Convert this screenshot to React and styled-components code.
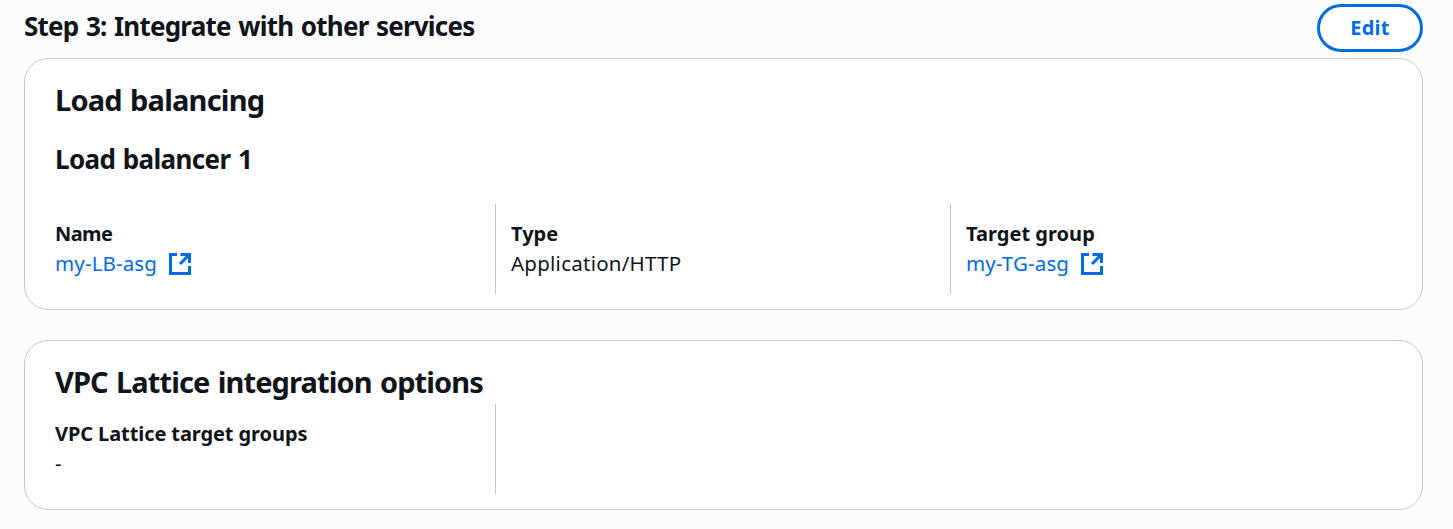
import React from 'react';
import styled, { createGlobalStyle } from 'styled-components';

const GlobalStyle = createGlobalStyle`
  * { box-sizing: border-box; }
  body {
    margin: 0;
    min-height: 100vh;
    background: #fcfcfe;
    color: #0f141a;
    font-family: "Noto Sans", "Open Sans", sans-serif;
    font-size: 20px;
    line-height: 30px;
  }
`;

const Page = styled.main`
  padding: 4px 30px 0 24px;
`;

const StepHeader = styled.header`
  display: flex;
  justify-content: space-between;
  align-items: flex-start;
  height: 54px;
`;

const Heading = styled.h2`
  margin: 0;
  font-size: ${(p) => p.$size}px;
  line-height: ${(p) => p.$line}px;
  font-weight: 680;
  letter-spacing: ${(p) => p.$tracking || 0}px;
  word-spacing: 1.5px;
  white-space: nowrap;
`;

const EditButton = styled.button`
  width: 106px;
  height: 48px;
  padding: 0;
  border: 3px solid #006ce0;
  border-radius: 24px;
  background: #fff;
  color: #006ce0;
  font: 700 20px/42px "Noto Sans", sans-serif;
  letter-spacing: 0.3px;
`;

const Card = styled.section`
  height: ${(p) => p.$height}px;
  margin-bottom: 30px;
  padding: 19px 30px 15px;
  border: 1px solid #c6c6cd;
  border-radius: 24px;
  background: #fff;
  display: flex;
  flex-direction: column;
`;

const Subheading = styled.div`
  margin-top: 19px;
`;

const Columns = styled.div`
  display: grid;
  grid-template-columns: 441px 455px 1fr;
  height: 90px;
  margin-top: auto;
`;

const Column = styled.div`
  padding: 15px 0 0 ${(p) => (p.$first ? 0 : 15)}px;
  border-right: ${(p) => (p.$divider ? '1px solid #c6c6cd' : 'none')};
`;

const Label = styled.div`
  font-weight: 690;
  letter-spacing: ${(p) => p.$tracking || 0}px;
`;

const Value = styled.div`
  font-size: 20.5px;
  line-height: 28px;
  padding-bottom: 2px;
  letter-spacing: ${(p) => (p.$tracking ?? 0.25)}px;
`;

const Link = styled.a`
  display: flex;
  align-items: center;
  gap: 12px;
  color: #006ce0;
`;

const ExternalIcon = () => (
  <svg width="22" height="22" viewBox="0 0 22 22" fill="none" stroke="#006ce0" strokeWidth="3">
    <path d="M8 1.5H1.5v19h19V13" />
    <path d="M11.5 1.5h9V10M20.5 1.5l-9.5 9.5" />
  </svg>
);

export default function App() {
  return (
    <>
      <GlobalStyle />
      <Page>
        <StepHeader>
          <Heading $size={26} $line={45} $tracking={-0.78}>Step 3: Integrate with other services</Heading>
          <EditButton>Edit</EditButton>
        </StepHeader>
        <Card $height={252}>
          <Heading $size={29} $line={44} $tracking={-0.8}>Load balancing</Heading>
          <Subheading>
            <Heading as="h3" $size={26} $line={36} $tracking={-0.65}>Load balancer 1</Heading>
          </Subheading>
          <Columns>
            <Column $first $divider>
              <Label $tracking={-0.6}>Name</Label>
              <Link><Value $tracking={0.14}>my-LB-asg</Value><ExternalIcon /></Link>
            </Column>
            <Column $divider>
              <Label>Type</Label>
              <Value>Application/HTTP</Value>
            </Column>
            <Column>
              <Label $tracking={0.03}>Target group</Label>
              <Link><Value $tracking={0.14}>my-TG-asg</Value><ExternalIcon /></Link>
            </Column>
          </Columns>
        </Card>
        <Card $height={170}>
          <Heading $size={29} $line={44} $tracking={-0.88}>VPC Lattice integration options</Heading>
          <Columns>
            <Column $first $divider>
              <Label $tracking={-0.09}>VPC Lattice target groups</Label>
              <Value>-</Value>
            </Column>
          </Columns>
        </Card>
      </Page>
    </>
  );
}
